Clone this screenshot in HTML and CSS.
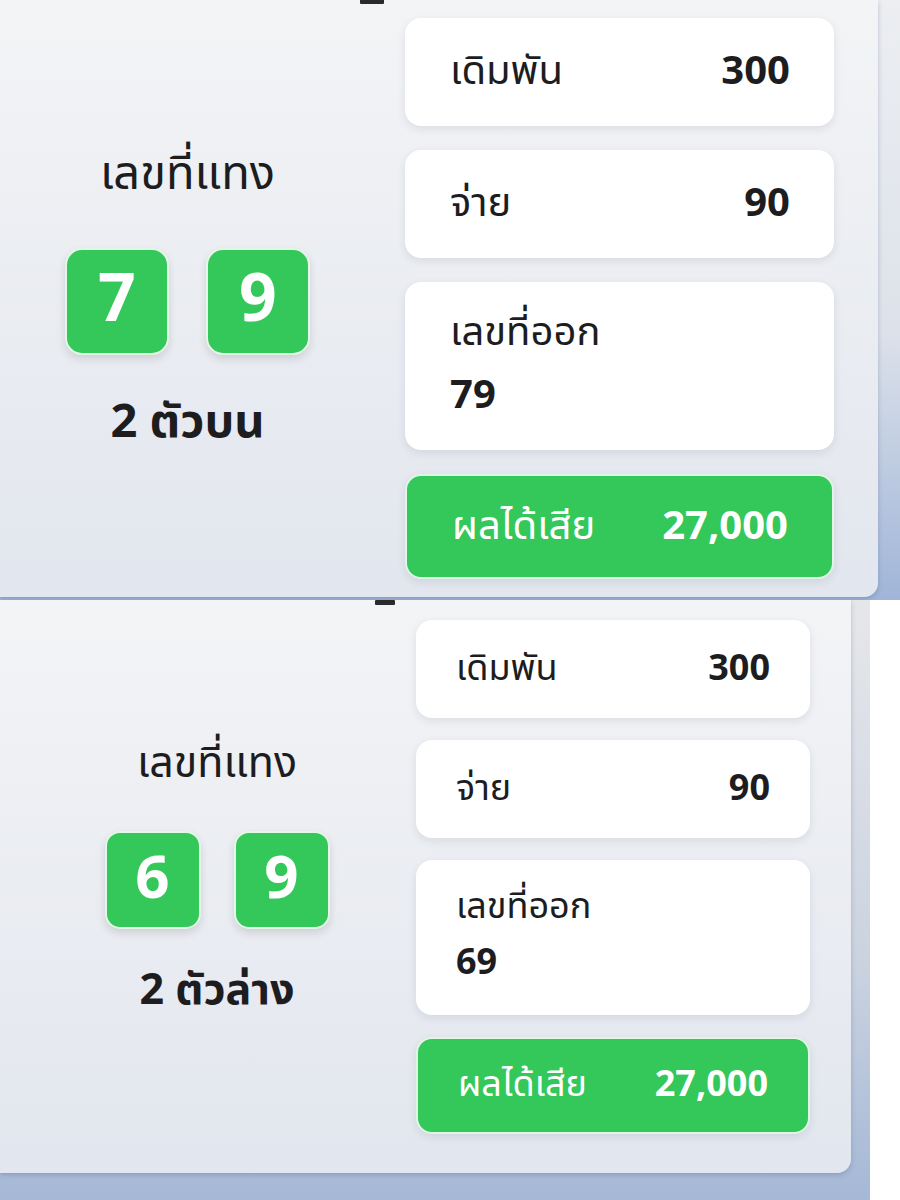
FILE: index.html
```html
<!DOCTYPE html>
<html lang="th">
<head>
  <meta charset="UTF-8">
  <meta name="viewport" content="width=device-width, initial-scale=1.0">
  <title>ผลได้เสีย</title>
  <link rel="stylesheet" href="styles.css">
</head>
<body>

  <!-- 2 ตัวบน -->
  <div class="shot shot-top">
    <div class="sheet">
      <span class="cut-mark"></span>
      <div class="pick">
        <div class="pick-label">เลขที่แทง</div>
        <div class="digits">
          <span class="digit">7</span>
          <span class="digit">9</span>
        </div>
        <div class="pick-type">2 ตัวบน</div>
      </div>
      <div class="summary">
        <div class="row"><span>เดิมพัน</span><b>300</b></div>
        <div class="row"><span>จ่าย</span><b>90</b></div>
        <div class="row row-stack"><span>เลขที่ออก</span><b>79</b></div>
        <div class="row row-result"><span>ผลได้เสีย</span><b>27,000</b></div>
      </div>
    </div>
  </div>

  <!-- 2 ตัวล่าง -->
  <div class="shot shot-bottom">
    <div class="sheet">
      <span class="cut-mark"></span>
      <div class="pick">
        <div class="pick-label">เลขที่แทง</div>
        <div class="digits">
          <span class="digit">6</span>
          <span class="digit">9</span>
        </div>
        <div class="pick-type">2 ตัวล่าง</div>
      </div>
      <div class="summary">
        <div class="row"><span>เดิมพัน</span><b>300</b></div>
        <div class="row"><span>จ่าย</span><b>90</b></div>
        <div class="row row-stack"><span>เลขที่ออก</span><b>69</b></div>
        <div class="row row-result"><span>ผลได้เสีย</span><b>27,000</b></div>
      </div>
    </div>
  </div>

</body>
</html>
```

FILE: styles.css
```css
body {
  margin: 0;
  font-family: "Noto Sans Thai", "Noto Sans Thai UI", "Noto Sans", sans-serif;
  background-color: #fff;
  color: #1d1d1f;
}

.shot {
  height: 600px;
  overflow: hidden;
}
.shot-top {
  width: 900px;
  background: linear-gradient(#eceef1, #dde2ea 55%, #a0b5d8);
}
.shot-bottom {
  width: 870px;
  background: linear-gradient(#e6e7ea, #cbd3e0 60%, #a5b8d6);
}

.sheet {
  position: relative;
  display: grid;
  align-items: center;
  align-content: start;
  box-sizing: border-box;
  background: linear-gradient(#f3f4f6, #e2e6ee);
  border-radius: 0 0 14px 0;
  box-shadow: 0 2px 5px rgba(70, 90, 130, 0.3);
}
.shot-top .sheet {
  width: 878px;
  height: 597px;
  grid-template-columns: 375px 429px;
  column-gap: 30px;
  padding: 18px 44px 0 0;
}
.shot-bottom .sheet {
  width: 851px;
  height: 573px;
  grid-template-columns: 398px 394px;
  padding: 20px 41px 0 18px;
}

/* tail of the heading cut off above */
.cut-mark {
  position: absolute;
  top: -2px;
  width: 24px;
  height: 6px;
  background: #2a2a2a;
  border-radius: 1px;
}
.shot-top .cut-mark {
  left: 360px;
}
.shot-bottom .cut-mark {
  left: 375px;
  top: 0;
  width: 20px;
  height: 5px;
}

/* left column */
.pick {
  display: flex;
  flex-direction: column;
  align-items: center;
}
.pick-type {
  font-weight: 700;
}
.digits {
  display: flex;
}
.digit {
  display: flex;
  align-items: center;
  justify-content: center;
  box-sizing: border-box;
  background-color: #34c759;
  border: 2px solid #e3f7e6;
  color: #fff;
  font-weight: 700;
  box-shadow: 0 4px 8px rgba(0, 0, 0, 0.12);
}

.shot-top .pick-label,
.shot-top .pick-type {
  font-size: 47px;
  line-height: 60px;
}
.shot-top .digits { gap: 37px; margin: 43px 0 38px; }
.shot-top .digit {
  width: 104px;
  height: 107px;
  border-radius: 17px;
  font-size: 66px;
}

.shot-bottom .pick-label,
.shot-bottom .pick-type {
  font-size: 43px;
  line-height: 54px;
}
.shot-bottom .digits { gap: 33px; margin: 40px 0 35px; }
.shot-bottom .digit {
  width: 96px;
  height: 98px;
  border-radius: 15px;
  font-size: 60px;
}

/* right column */
.summary {
  display: flex;
  flex-direction: column;
}
.row {
  display: flex;
  align-items: center;
  justify-content: space-between;
  box-sizing: border-box;
  background-color: #fff;
  border-radius: 16px;
  box-shadow: 0 3px 8px rgba(40, 50, 80, 0.1);
}
.row b {
  font-weight: 700;
}
.row-stack {
  flex-direction: column;
  align-items: flex-start;
  justify-content: flex-start;
}
.row-result {
  background-color: #34c759;
  border: 2px solid #dff6e4;
  color: #fff;
}

.shot-top .summary { gap: 24px; }
.shot-top .row {
  height: 108px;
  padding: 0 44px 0 45px;
  font-size: 40px;
  line-height: 52px;
}
.shot-top .row-stack {
  height: 168px;
  padding-top: 25px;
  row-gap: 11px;
}
.shot-top .row-result { height: 105px; }

.shot-bottom .summary { gap: 22px; }
.shot-bottom .row {
  height: 98px;
  padding: 0 40px;
  font-size: 36px;
  line-height: 47px;
}
.shot-bottom .row-stack {
  height: 155px;
  padding-top: 24px;
  row-gap: 9px;
}
.shot-bottom .row-result { height: 97px; }
```
